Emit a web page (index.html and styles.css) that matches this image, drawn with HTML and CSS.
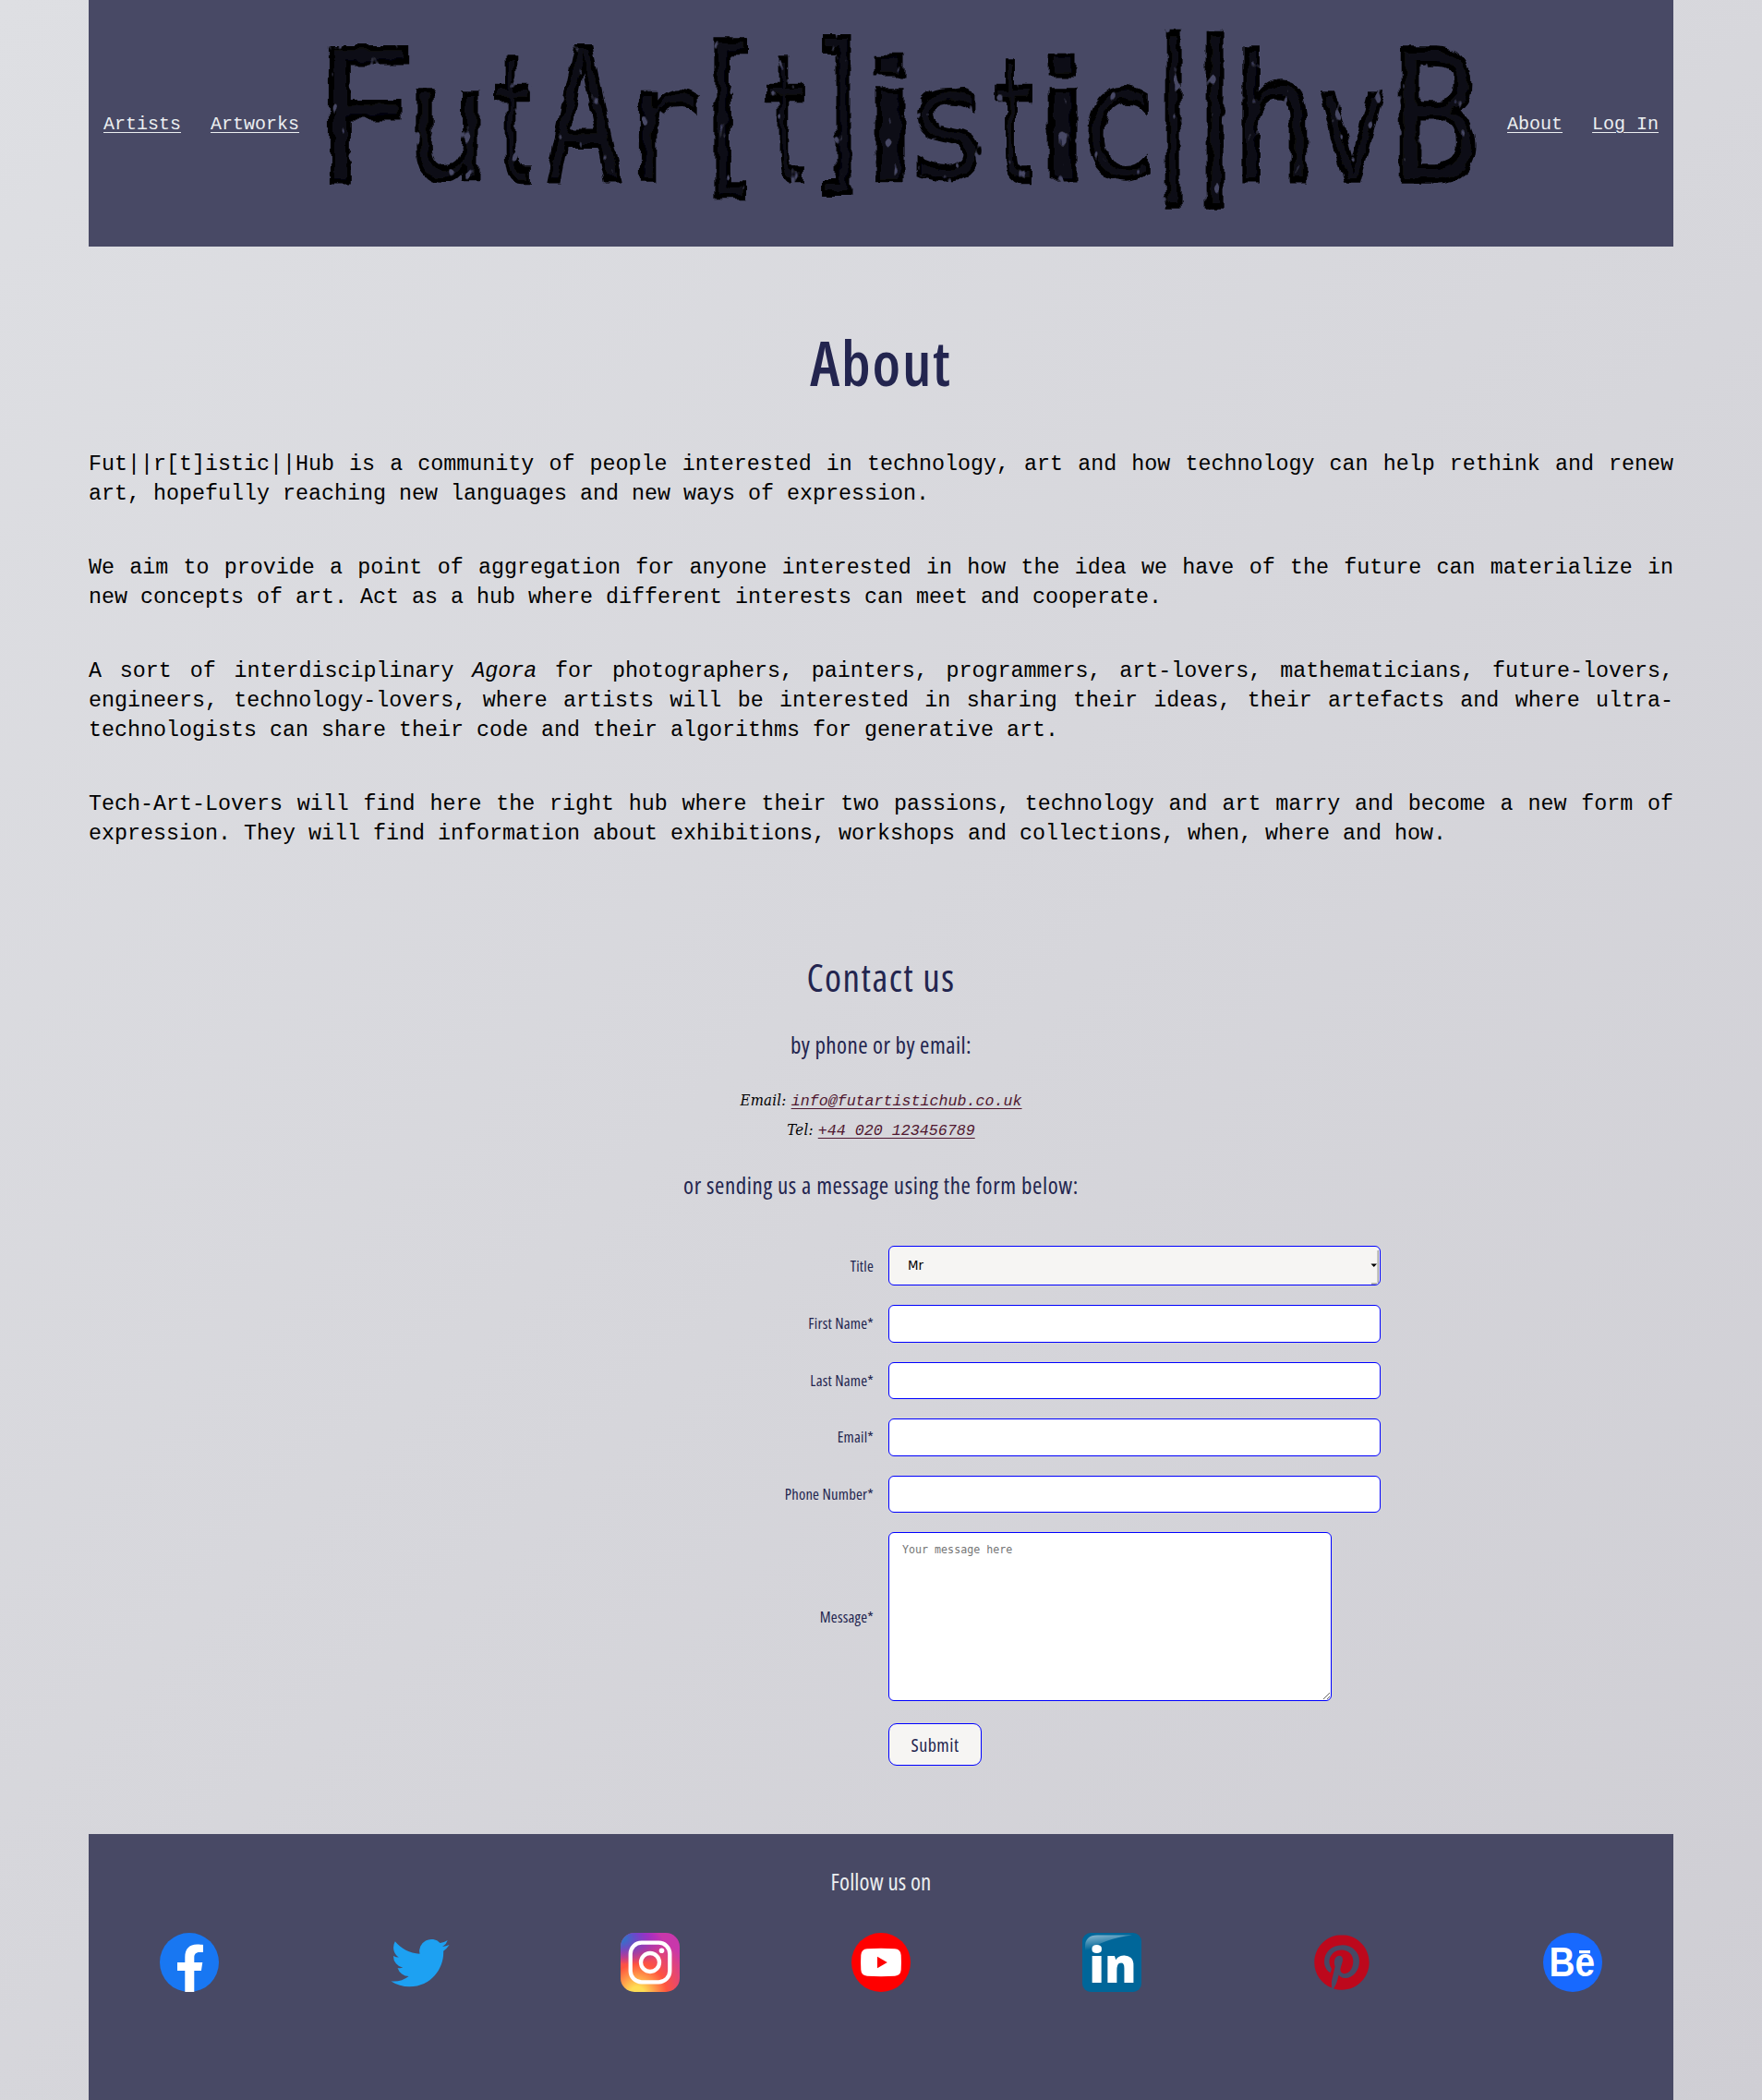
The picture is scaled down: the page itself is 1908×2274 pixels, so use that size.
FILE: index.html
```html
<!DOCTYPE html>
<html lang="en">
<head>
<meta charset="utf-8">
<title>About - FutAr[t]istic||huB</title>
<link rel="stylesheet" href="styles.css">
</head>
<body>
<div class="page">
<header class="header">
  <nav class="nav"><a href="#">Artists</a><a href="#">Artworks</a></nav>
  <svg class="logo" viewBox="356 0 1244 267" role="img" aria-label="FutAr[t]istic||huB">
    <defs>
      <filter id="worn" filterUnits="userSpaceOnUse" x="350" y="20" width="1256" height="220">
        <feTurbulence type="fractalNoise" baseFrequency="0.055" numOctaves="2" seed="4" result="n"/>
        <feDisplacementMap in="SourceGraphic" in2="n" scale="10" xChannelSelector="R" yChannelSelector="G" result="d"/>
        <feTurbulence type="fractalNoise" baseFrequency="0.09 0.05" numOctaves="2" seed="11"/>
        <feColorMatrix values="0 0 0 0 0  0 0 0 0 0  0 0 0 0 0  16 0 0 0 -11.2" result="h"/>
        <feComposite in="d" in2="h" operator="out"/>
      </filter>
    </defs>
    <g class="logo-letters" filter="url(#worn)">
      <text transform="matrix(1.829 0 0 1.974 338.5 195.5)">F</text>
      <text transform="matrix(1.517 0 0 1.689 438.3 192.9)">u</text>
      <text transform="matrix(0.861 0 0 1.877 531.1 195.5)">t</text>
      <text transform="matrix(1.366 0 0 1.974 590.4 195.5)">A</text>
      <text transform="matrix(1.526 0 0 1.724 668.3 194.5)">r</text>
      <text transform="matrix(1.463 0 0 1.909 742.5 187.7)">[</text>
      <text transform="matrix(0.861 0 0 1.877 826.1 195.5)">t</text>
      <text transform="matrix(1.323 0 0 1.887 869.8 185)">]</text>
      <text class="i" transform="matrix(2.880 0 0 1.763 923.5 194.5)">i</text>
      <text transform="matrix(1.588 0 0 1.661 978.6 191.9)">s</text>
      <text transform="matrix(0.883 0 0 1.877 1072 195.5)">t</text>
      <text class="i" transform="matrix(2.773 0 0 1.763 1111.5 194.5)">i</text>
      <text transform="matrix(1.440 0 0 1.730 1167 192.8)">c</text>
      <text transform="matrix(1.493 0 0 1.871 1225.2 178.7)">|</text>
      <text transform="matrix(1.600 0 0 1.871 1267.5 178.7)">|</text>
      <text transform="matrix(1.564 0 0 1.881 1332.8 195.5)">h</text>
      <text transform="matrix(1.280 0 0 1.719 1425.5 194.5)">v</text>
      <text transform="matrix(1.631 0 0 1.961 1505.8 195.5)">B</text>
    </g>
  </svg>
  <nav class="nav"><a href="#">About</a><a href="#">Log In</a></nav>
</header>
<main>
  <h1>About</h1>
  <div class="intro">
    <p>Fut||r[t]istic||Hub is a community of people interested in technology, art and how technology can help rethink and renew art, hopefully reaching new languages and new ways of expression.</p>
    <p>We aim to provide a point of aggregation for anyone interested in how the idea we have of the future can materialize in new concepts of art. Act as a hub where different interests can meet and cooperate.</p>
    <p>A sort of interdisciplinary <em>Agora</em> for photographers, painters, programmers, art-lovers, mathematicians, future-lovers, engineers, technology-lovers, where artists will be interested in sharing their ideas, their artefacts and where ultra-technologists can share their code and their algorithms for generative art.</p>
    <p>Tech-Art-Lovers will find here the right hub where their two passions, technology and art marry and become a new form of expression. They will find information about exhibitions, workshops and collections, when, where and how.</p>
  </div>
  <section class="contact">
    <h2>Contact us</h2>
    <h3>by phone or by email:</h3>
    <address>
      <div>Email: <a href="#">info@futartistichub.co.uk</a></div>
      <div>Tel: <a href="#">+44 020 123456789</a></div>
    </address>
    <h3 class="wide">or sending us a message using the form below:</h3>
    <form class="form">
      <label for="title">Title</label>
      <div class="select">
        <select id="title"><option>Mr</option></select>
        <svg class="caret" viewBox="0 0 10 41"><path d="M9.500 4v35M2 40.200h6" stroke="#a5a5a5" stroke-width="2" fill="none"/><path d="M1.500 18.500h6.500l-3.250 3.500z"/></svg>
      </div>
      <label for="first">First Name*</label><input id="first" type="text">
      <label for="last">Last Name*</label><input id="last" type="text">
      <label for="email">Email*</label><input id="email" type="email">
      <label for="phone">Phone Number*</label><input id="phone" type="tel">
      <label for="message">Message*</label><textarea id="message" placeholder="Your message here"></textarea>
      <button class="submit" type="button">Submit</button>
    </form>
  </section>
</main>
<footer class="footer">
  <h3>Follow us on</h3>
  <div class="social">
    <a href="#" aria-label="Facebook"><svg viewBox="0 0 64 64"><circle cx="32" cy="32" r="32" fill="#1877f2"/><path fill="#fff" d="M27.300 64V41H19v-9h8.300v-5.500c0-9 4.500-14 13-14 3.500 0 6.700.4 6.700.4V21h-4c-4 0-5.700 2.400-5.700 5.500V32h9l-1.400 9h-7.600v23z"/></svg></a>
    <a href="#" aria-label="Twitter"><svg viewBox="0 0 64 64"><path transform="translate(.5 1) scale(2.630)" fill="#1da1f2" d="M23.953 4.570a10 10 0 01-2.825.775 4.958 4.958 0 002.163-2.723c-.951.555-2.005.959-3.127 1.184a4.920 4.920 0 00-8.384 4.482C7.690 8.095 4.067 6.130 1.640 3.162a4.822 4.822 0 00-.666 2.475c0 1.710.870 3.213 2.188 4.096a4.904 4.904 0 01-2.228-.616v.060a4.923 4.923 0 003.946 4.827 4.996 4.996 0 01-2.212.085 4.936 4.936 0 004.604 3.417 9.867 9.867 0 01-6.102 2.105c-.390 0-.779-.023-1.170-.067a13.995 13.995 0 007.557 2.209c9.053 0 13.998-7.496 13.998-13.985 0-.210 0-.420-.015-.630A9.935 9.935 0 0024 4.590z"/></svg></a>
    <a href="#" aria-label="Instagram"><svg viewBox="0 0 64 64"><defs><radialGradient id="ig" gradientUnits="userSpaceOnUse" cx="18" cy="66" r="64"><stop offset="0" stop-color="#fd5"/><stop offset=".12" stop-color="#fd5"/><stop offset=".5" stop-color="#ff543e"/><stop offset="1" stop-color="#c837ab"/></radialGradient><radialGradient id="ig2" gradientUnits="userSpaceOnUse" cx="-8" cy="4" r="30" gradientTransform="matrix(2.200 .6 -.2 1 0 0)"><stop offset="0" stop-color="#3771c8"/><stop offset=".35" stop-color="#3771c8"/><stop offset="1" stop-color="#60f" stop-opacity="0"/></radialGradient></defs><rect width="64" height="64" rx="15" fill="url(#ig)"/><rect width="64" height="64" rx="15" fill="url(#ig2)"/><rect x="10.700" y="10.700" width="42.600" height="42.600" rx="12" fill="none" stroke="#fff" stroke-width="4.300"/><circle cx="32" cy="32" r="10" fill="none" stroke="#fff" stroke-width="4.300"/><circle cx="44.500" cy="19.300" r="2.800" fill="#fff"/></svg></a>
    <a href="#" aria-label="YouTube"><svg viewBox="0 0 64 64"><circle cx="32" cy="32" r="32" fill="red"/><path fill="#fff" d="M17 17.300q15-.9 30 0 6.300.5 6.700 6.700.5 8 0 16-.4 6.200-6.700 6.700-15 .9-30 0-6.300-.5-6.700-6.700-.5-8 0-16 .4-6.200 6.700-6.700z"/><path fill="red" d="M28 25.700v12.600L38.800 32z"/></svg></a>
    <a href="#" aria-label="LinkedIn"><svg viewBox="0 0 64 64"><defs><linearGradient id="gl" x1="0" y1="0" x2=".35" y2="1"><stop offset="0" stop-color="#fff" stop-opacity=".55"/><stop offset=".8" stop-color="#fff" stop-opacity="0"/></linearGradient></defs><rect width="64" height="64" rx="9" fill="#069"/><path fill="url(#gl)" d="M3 21V15Q3 2.500 16 2.500H54Q24 6 3 21z"/><text x="7.200" y="53.500" textLength="51.500" lengthAdjust="spacingAndGlyphs" class="in-mark">in</text></svg></a>
    <a href="#" aria-label="Pinterest"><svg viewBox="0 0 64 64"><path transform="translate(2.200 2.200) scale(2.480)" fill="#bd081c" d="M12.017 0C5.396 0 .029 5.367.029 11.987c0 5.079 3.158 9.417 7.618 11.162-.105-.949-.199-2.403.041-3.439.219-.937 1.406-5.957 1.406-5.957s-.359-.720-.359-1.781c0-1.663.967-2.911 2.168-2.911 1.024 0 1.518.769 1.518 1.688 0 1.029-.653 2.567-.992 3.992-.285 1.193.600 2.165 1.775 2.165 2.128 0 3.768-2.245 3.768-5.487 0-2.861-2.063-4.869-5.008-4.869-3.410 0-5.409 2.562-5.409 5.199 0 1.033.394 2.143.889 2.741.099.120.112.225.085.345-.090.375-.293 1.199-.334 1.363-.053.225-.172.271-.401.165-1.495-.690-2.433-2.878-2.433-4.646 0-3.776 2.748-7.252 7.920-7.252 4.158 0 7.392 2.967 7.392 6.923 0 4.135-2.607 7.462-6.233 7.462-1.214 0-2.354-.629-2.758-1.379l-.749 2.848c-.269 1.045-1.004 2.352-1.498 3.146 1.123.345 2.306.535 3.550.535 6.607 0 11.985-5.365 11.985-11.987C23.970 5.390 18.592.026 11.985.026z"/></svg></a>
    <a href="#" aria-label="Behance"><svg viewBox="0 0 64 64"><circle cx="32" cy="32" r="32" fill="#1769ff"/><text x="6.500" y="47" textLength="49.500" lengthAdjust="spacingAndGlyphs" class="be-mark">Be</text><rect x="39" y="19" width="12" height="3.200" fill="#fff"/></svg></a>
  </div>
</footer>
</div>
</body>
</html>
```
FILE: styles.css
```css
* { box-sizing: border-box; }
body {
  margin: 0;
  background: linear-gradient(135deg, #dedfe3, #cfced4);
  color: #000;
}
.page { width: 1716px; margin: 0 auto; }
.header {
  display: flex;
  align-items: center;
  height: 267px;
  background: #484965;
}
.nav { display: flex; flex: none; padding-top: 2px; }
.nav a {
  padding: 0 16px;
  font: 20px/24px "Liberation Mono", monospace;
  color: #ebeef0;
  white-space: nowrap;
  text-decoration: underline;
  text-decoration-thickness: 1px;
  text-underline-offset: 3px;
}
.logo { display: block; width: 1244px; height: 267px; margin: 0 16px; flex: none; overflow: visible; }
.logo-letters {
  font: 100px "DejaVu Sans Mono", monospace;
  fill: #0c0c12;
  stroke: #000;
  stroke-width: 5px;
}
.logo-letters text { vector-effect: non-scaling-stroke; }
.logo-letters .i { font-family: "DejaVu Sans", sans-serif; }
h1, h2, h3, label, .submit {
  margin: 0;
  font-family: "Open Sans", sans-serif;
  font-weight: 400;
  font-stretch: 75%;
  color: #23254f;
  text-align: center;
}
h1 { margin-top: 92px; font-size: 66px; line-height: 66px; font-weight: 600; letter-spacing: 1.800px; }
.intro { margin-top: 62px; }
.intro p {
  margin: 0 0 48px;
  font: 23.330px/32px "Liberation Mono", monospace;
  text-align: justify;
}
.contact { padding-top: 71px; }
h2 { font-size: 41px; line-height: 40px; letter-spacing: 1.500px; }
h3 { margin-top: 41px; font-size: 25px; line-height: 25px; letter-spacing: .450px; }
h3.wide { margin-top: 31px; letter-spacing: .600px; }
address {
  margin-top: 32px;
  font: italic 16.670px/32px "DejaVu Serif Condensed", "Noto Serif", serif;
  letter-spacing: .250px;
  text-align: center;
}
address a {
  font: italic 16.670px/16px "Liberation Mono", monospace;
  letter-spacing: 0;
  color: #501830;
  text-decoration: underline;
  text-decoration-thickness: 1px;
  text-underline-offset: 3px;
}
.form {
  display: grid;
  grid-template-columns: 850px auto;
  grid-template-rows: 43px repeat(4, 40.500px) 183px 46px;
  column-gap: 16px;
  row-gap: 21px;
  margin-top: 53px;
  align-items: center;
  justify-content: start;
}
label { text-align: right; font-size: 16.670px; line-height: 20px; font-weight: 400; letter-spacing: .200px; }
input, select, textarea {
  display: block;
  width: 533px;
  height: 100%;
  margin: 0;
  border: 1px solid #00f;
  border-radius: 6px;
  background: #fff;
  outline: 0;
}
.select { position: relative; height: 43px; }
select { appearance: none; padding: 0 20px; background: #f6f5f3; font: 13.330px "DejaVu Sans", sans-serif; color: #000; }
.caret { position: absolute; right: 2px; top: 1px; width: 10px; height: 41px; }
textarea {
  width: 480px;
  padding: 11px 14px;
  font: 11.670px/14px "DejaVu Sans Mono", monospace;
  resize: both;
}
.submit {
  grid-column: 2;
  margin-top: 6px;
  justify-self: start;
  width: 101px;
  height: 46px;
  padding: 0;
  border: 1px solid #00f;
  border-radius: 9px;
  background: #f6f5f3;
  font-size: 20px;
  letter-spacing: .500px;
}
.footer { height: 288px; margin-top: 77px; padding: 39px 77px 0; background: #484965; }
.footer h3 { margin: 0; color: #ebeef0; letter-spacing: .100px; }
.social { display: flex; justify-content: space-between; margin-top: 43px; }
.social svg { display: block; width: 64px; height: 64px; }
.in-mark { font: 800 53px "Open Sans", sans-serif; fill: #fff; }
.be-mark { font: bold 43.500px "Liberation Sans", sans-serif; fill: #fff; }
```
